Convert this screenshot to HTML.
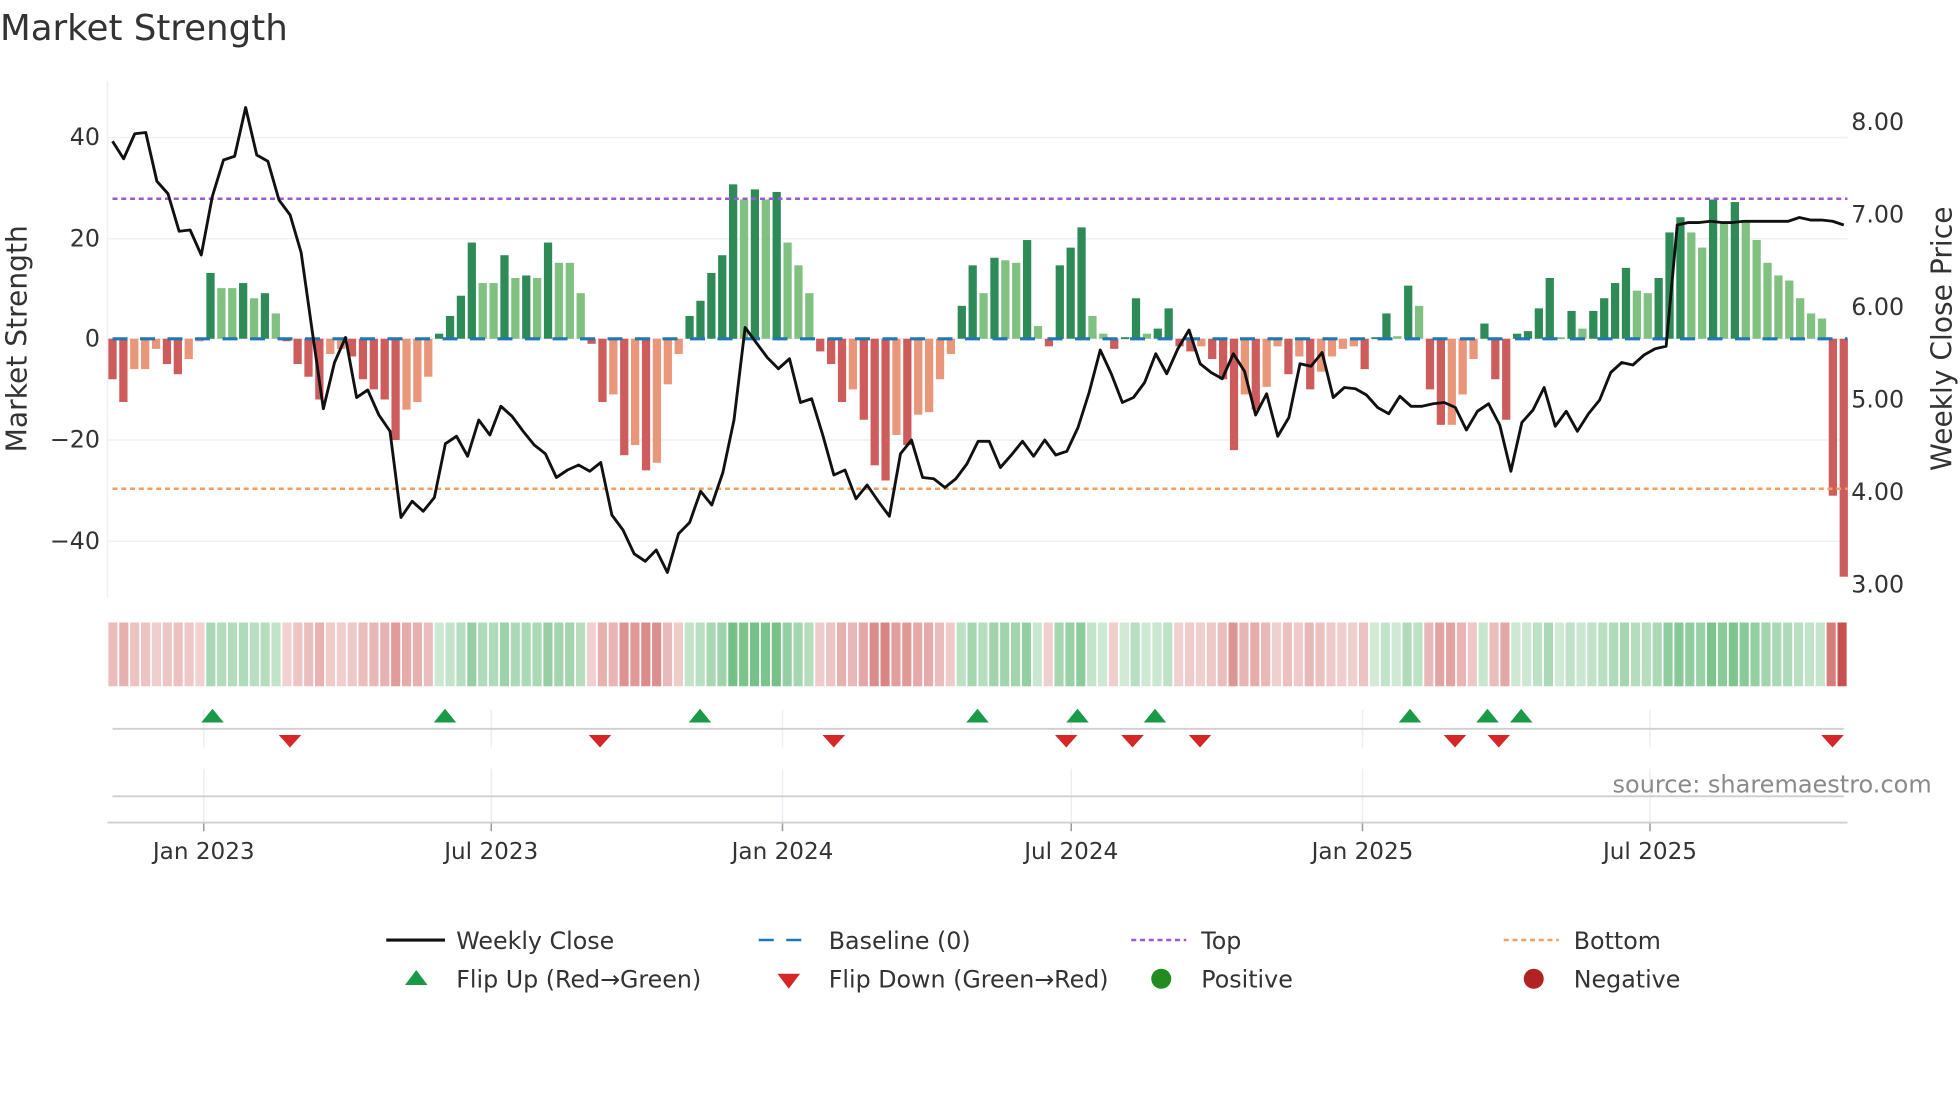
<!DOCTYPE html>
<html><head><meta charset="utf-8">
<style>
html,body{margin:0;padding:0;background:#fff;width:1960px;height:1102px;overflow:hidden}
svg{display:block}
text{font-family:"DejaVu Sans","Liberation Sans",sans-serif;fill:#333}
</style></head><body>
<svg id="s" width="1960" height="1102" viewBox="0 0 1568 881.6" xmlns="http://www.w3.org/2000/svg">
<text x="0" y="32" font-size="28.5" fill="#333">Market Strength</text>
<g id="grid"></g>
<g id="bars"></g>
<g id="heat"></g>
<g id="low"></g>
<text x="1290" y="634" font-size="19.2" style="fill:#8a8a8a">source: sharemaestro.com</text>
<text transform="translate(21,271) rotate(-90)" text-anchor="middle" font-size="22.5">Market Strength</text>
<text transform="translate(1561,271) rotate(-90)" text-anchor="middle" font-size="22.5">Weekly Close Price</text>
<g font-size="19">
<line x1="309" y1="752" x2="356" y2="752" stroke="#111" stroke-width="2.5"/>
<text x="365" y="759">Weekly Close</text>
<line x1="607" y1="752" x2="651" y2="752" stroke="#1f77b4" stroke-width="2" stroke-dasharray="12,10"/>
<text x="663" y="759">Baseline (0)</text>
<line x1="905" y1="752" x2="949" y2="752" stroke="#9b59d6" stroke-width="2" stroke-dasharray="4,3"/>
<text x="961" y="759">Top</text>
<line x1="1203" y1="752" x2="1247" y2="752" stroke="#f0a060" stroke-width="2" stroke-dasharray="4,3"/>
<text x="1259" y="759">Bottom</text>
<polygon points="324,788 342,788 333,776" fill="#1a9a48"/>
<text x="365" y="790">Flip Up (Red→Green)</text>
<polygon points="622,779 640,779 631,791" fill="#d62728"/>
<text x="663" y="790">Flip Down (Green→Red)</text>
<circle cx="929" cy="783" r="8" fill="#228b22"/>
<text x="961" y="790">Positive</text>
<circle cx="1227" cy="783" r="8" fill="#b22222"/>
<text x="1259" y="790">Negative</text>
</g>
</svg>
<script>
var NS="http://www.w3.org/2000/svg";
function el(p,t,a,txt){var e=document.createElementNS(NS,t);for(var k in a)e.setAttribute(k,a[k]);if(txt!=null)e.textContent=txt;document.getElementById(p).appendChild(e);return e;}
var V=[-8,-12.5,-6,-6,-2,-5,-7,-4,-0.5,13,10,10,11,8,9,5,-0.5,-5,-7.5,-12,-3,-2,-3.5,-8,-10,-12,-20,-14,-12.5,-7.5,1,4.5,8.5,19,11,11,16.5,12,12.5,12,19,15,15,9,-1,-12.5,-11,-23,-21,-26,-24.5,-9,-3,4.5,7.5,13,16.5,30.5,27.5,29.5,27.5,29,19,14.5,9,-2.5,-5,-12.5,-10,-16,-25,-28,-19,-21,-15,-14.5,-8,-3,6.5,14.5,9,16,15.5,15,19.5,2.5,-1.5,14.5,18,22,4.5,1,-2,0.3,8,1,2,6,-1.5,-2.5,-1.5,-4,-8,-22,-11,-14,-9.5,-1.5,-7,-3.5,-10,-6.5,-3.5,-2,-1.5,-6,0.3,5,0.5,10.5,6.5,-10,-17,-17,-11,-4,3,-8,-16,1,1.5,6,12,0.3,5.5,2,5.5,8,11,14,9.5,9,12,21,24,21,18,27.5,23,27,23,19.5,15,12.5,11.5,8,5,4,-31,-47];
var P=[113,127,107,106,145,155,185,184,204,157,128,125,86,124,129,160,172,202,265,327,290,270,318,312,332,345,414,401,409,398,355,349,365,336,348,325,333,345,356,363,382,376,372,377,370,412,424,443,449,440,458,427,418,393,404,378,336,262,274,286,295,287,322,319,348,380,376,399,388,401,413,363,352,382,383,390,383,371,353,353,374,364,353,365,352,364,361,342,314,280,299,322,318,306,283,299,279,264,291,298,303,283,297,332,315,349,334,291,293,282,318,310,311,316,326,331,317,325,325,323,322,326,344,329,323,340,377,338,328,310,341,329,345,331,320,298,290,292,284,279,277,180,178,178,177,178,178,177,177,177,177,177,174,176,176,177,180];
var X0=90,X1=1475,n=V.length,dx=(X1-X0)/(n-1);
[110,191,271,352,433].forEach(function(y,i){el("grid","line",{x1:86,x2:1478,y1:y,y2:y,stroke:"#eef0f3","stroke-width":1.2});
 el("grid","text",{x:80,y:y+6,"text-anchor":"end","font-size":"19"},["40","20","0","\u221220","\u221240"][i]);});
["8.00","7.00","6.00","5.00","4.00","3.00"].forEach(function(t,i){el("grid","text",{x:1481,y:98+i*74+6,"font-size":"19"},t);});
el("grid","line",{x1:86,x2:86,y1:65,y2:478,stroke:"#eef0f3","stroke-width":1.2});
for(var i=0;i<n;i++){var v=V[i],pv=i?V[i-1]:0,x=X0+i*dx,h=Math.abs(v)*4.05,c;
 if(v>=0)c=(v>pv)?"#2e8b57":"#80c080";else c=(v<pv)?"#cd5c5c":"#e9967a";
 el("bars","rect",{x:x-3.3,y:v>=0?271-h:271,width:6.6,height:Math.max(h,1.5),fill:c});}
el("bars","line",{x1:90,x2:1478,y1:271,y2:271,stroke:"#1f77b4","stroke-width":2.5,"stroke-dasharray":"12,10"});
el("bars","line",{x1:90,x2:1478,y1:159,y2:159,stroke:"#9b59d6","stroke-width":2,"stroke-dasharray":"4,3"});
el("bars","line",{x1:90,x2:1478,y1:391,y2:391,stroke:"#f0a060","stroke-width":2,"stroke-dasharray":"4,3"});
var m=P.length,dp=(X1-X0)/(m-1),d="";
for(var j=0;j<m;j++)d+=(j?"L":"M")+(X0+j*dp).toFixed(1)+","+P[j];
el("bars","path",{d:d,fill:"none",stroke:"#111","stroke-width":2.3,"stroke-linejoin":"round"});
function mix(a,b,t){return "rgb("+[0,1,2].map(function(k){return Math.round(a[k]+(b[k]-a[k])*t)}).join(",")+")";}
for(var i=0;i<n;i++){var v=V[i],x=86+i*(1392/n),c;
 if(v>=0)c=mix([255,255,255],[100,185,120],0.3+0.6*Math.min(v/30,1));else c=mix([255,255,255],[200,80,78],0.25+0.75*Math.min(-v/47,1));
 el("heat","rect",{x:x+0.7,y:498,width:1392/n-1.4,height:51,fill:c});}
[163,393,626,857,1090,1320].forEach(function(x,i){
 el("low","line",{x1:x,x2:x,y1:568,y2:598,stroke:"#eceef1","stroke-width":1.2});
 el("low","line",{x1:x,x2:x,y1:615,y2:658,stroke:"#eceef1","stroke-width":1.2});
 el("low","line",{x1:x,x2:x,y1:658,y2:665,stroke:"#999","stroke-width":1.2});
 el("low","text",{x:x,y:687,"text-anchor":"middle","font-size":"18.5"},["Jan 2023","Jul 2023","Jan 2024","Jul 2024","Jan 2025","Jul 2025"][i]);});
el("low","line",{x1:90,x2:1475,y1:583,y2:583,stroke:"#cfcfcf","stroke-width":1.5});
el("low","line",{x1:90,x2:1475,y1:637,y2:637,stroke:"#cfcfcf","stroke-width":1.5});
el("low","line",{x1:86,x2:1478,y1:658,y2:658,stroke:"#cfcfcf","stroke-width":1.5});
[170,356,560,782,862,924,1128,1190,1217].forEach(function(x){el("low","polygon",{points:(x-9)+",578 "+(x+9)+",578 "+x+",567",fill:"#1a9a48"});});
[232,480,667,853,906,960,1164,1199,1466].forEach(function(x){el("low","polygon",{points:(x-9)+",588 "+(x+9)+",588 "+x+",598",fill:"#d62728"});});
</script>
</body></html>
